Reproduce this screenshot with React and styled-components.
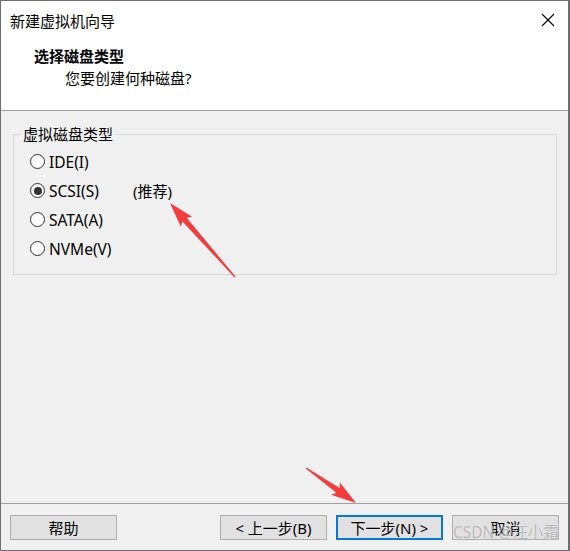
import React from 'react';
import styled, { createGlobalStyle } from 'styled-components';

const GlobalStyle = createGlobalStyle`
  html, body {
    margin: 0;
    padding: 0;
    background: #f0f0f0;
  }
  body {
    font-family: "Noto Sans", "Noto Sans CJK SC", sans-serif;
    color: #000;
  }
`;

const Window = styled.div`
  position: relative;
  box-sizing: border-box;
  width: 570px;
  height: 551px;
  display: flex;
  flex-direction: column;
  border: 1px solid #6f6f6f;
  border-right-width: 2px;
  background: #f0f0f0;
  font-size: 15px;
`;

const Header = styled.header`
  background: #fff;
  height: 110px;
  box-sizing: border-box;
  border-bottom: 1px solid #a0a0a0;
`;

const TitleBar = styled.div`
  height: 38px;
  display: flex;
  align-items: center;
  justify-content: space-between;
  padding: 0 13px 0 9px;
  font-size: 15px;
`;

const CloseButton = styled.button`
  border: 0;
  background: none;
  padding: 0;
  width: 14px;
  height: 14px;
  display: flex;
  color: #000;
`;

const Heading = styled.div`
  margin: 7px 0 0 33px;
  font-weight: bold;
  line-height: 20px;
  font-size: 15px;
`;

const SubHeading = styled.div`
  margin: 2px 0 0 64px;
  line-height: 20px;
  font-size: 15px;
`;

const Body = styled.main`
  flex: 1;
  padding: 14px 11px 0 12px;
`;

const GroupBox = styled.fieldset`
  margin: 0;
  padding: 4px 0 11px 16px;
  border: 1px solid #d9d9d9;
  min-width: 0;
`;

const Legend = styled.legend`
  margin-left: -9px;
  padding: 0 2px;
  line-height: 18px;
  font-size: 15px;
`;

const Option = styled.label`
  display: flex;
  align-items: center;
  height: 29px;
  gap: 4px;
`;

const RadioDot = styled.span`
  box-sizing: border-box;
  width: 15px;
  height: 15px;
  border-radius: 50%;
  border: 1px solid #333;
  background: #fff;
  display: flex;
  align-items: center;
  justify-content: center;

  &::after {
    content: '';
    width: 8px;
    height: 8px;
    border-radius: 50%;
    background: #333;
    display: ${p => (p.$checked ? 'block' : 'none')};
  }
`;

const OptionText = styled.span`
  min-width: 80px;
  line-height: 20px;
  font-size: 15.5px;
`;

const Footer = styled.footer`
  border-top: 1px solid #a0a0a0;
  padding: 11px 9px 10px 9px;
  display: flex;
  justify-content: space-between;
`;

const ButtonGroup = styled.div`
  display: flex;
  gap: 9px;
`;

const Button = styled.button`
  box-sizing: border-box;
  width: 107px;
  height: 25px;
  padding: 0;
  font-family: inherit;
  font-size: 15px;
  color: #000;
  background: #e1e1e1;
  border: ${p => (p.$focused ? '2px solid #0078d7' : '1px solid #adadad')};
`;

const Watermark = styled.span`
  position: absolute;
  left: 452px;
  top: 521px;
  font-size: 15.5px;
  line-height: 20px;
  color: rgba(140, 140, 140, 0.6);
  text-shadow: 0 0 1px rgba(255, 255, 255, 0.8);
  pointer-events: none;
`;

const Annotations = styled.svg`
  position: absolute;
  left: -1px;
  top: -1px;
  pointer-events: none;
`;

// spits out a polygon for one of those tapered screenshot arrows
function arrowPoints([tx, ty], [px, py]) {
  const dx = px - tx;
  const dy = py - ty;
  const len = Math.hypot(dx, dy);
  const ux = dx / len;
  const uy = dy / len;
  const nx = -uy;
  const ny = ux;
  const head = 22;
  const neck = [px - ux * head, py - uy * head];
  const wing = [px - ux * (head + 3), py - uy * (head + 3)];
  const pts = [
    [tx + nx * 0.6, ty + ny * 0.6],
    [neck[0] + nx * 2.8, neck[1] + ny * 2.8],
    [wing[0] + nx * 7.5, wing[1] + ny * 7.5],
    [px, py],
    [wing[0] - nx * 7.5, wing[1] - ny * 7.5],
    [neck[0] - nx * 2.8, neck[1] - ny * 2.8],
    [tx - nx * 0.6, ty - ny * 0.6],
  ];
  return pts.map(p => p.map(v => v.toFixed(1)).join(',')).join(' ');
}

const options = [
  { id: 'ide', label: 'IDE(I)' },
  { id: 'scsi', label: 'SCSI(S)', note: '(推荐)', checked: true },
  { id: 'sata', label: 'SATA(A)' },
  { id: 'nvme', label: 'NVMe(V)' },
];

export default function App() {
  return (
    <>
      <GlobalStyle />
      <Window>
        <Header>
          <TitleBar>
            <span>新建虚拟机向导</span>
            <CloseButton aria-label="关闭">
              <svg width="14" height="14" viewBox="0 0 14 14">
                <path d="M1 1 L13 13 M13 1 L1 13" stroke="#000" strokeWidth="1.1" />
              </svg>
            </CloseButton>
          </TitleBar>
          <Heading>选择磁盘类型</Heading>
          <SubHeading>您要创建何种磁盘?</SubHeading>
        </Header>

        <Body>
          <GroupBox>
            <Legend>虚拟磁盘类型</Legend>
            {options.map(o => (
              <Option key={o.id}>
                <RadioDot $checked={o.checked} />
                <OptionText>{o.label}</OptionText>
                {o.note && <span>{o.note}</span>}
              </Option>
            ))}
          </GroupBox>
        </Body>

        <Footer>
          <Button>帮助</Button>
          <ButtonGroup>
            <Button>&lt; 上一步(B)</Button>
            <Button $focused>下一步(N) &gt;</Button>
            <Button>取消</Button>
          </ButtonGroup>
        </Footer>

        <Watermark>CSDN @汪小霜</Watermark>

        <Annotations width="570" height="551">
          <polygon points={arrowPoints([235, 277], [170, 203])} fill="#f53b3b" />
          <polygon points={arrowPoints([306, 468], [356, 503])} fill="#f53b3b" />
        </Annotations>
      </Window>
    </>
  );
}
